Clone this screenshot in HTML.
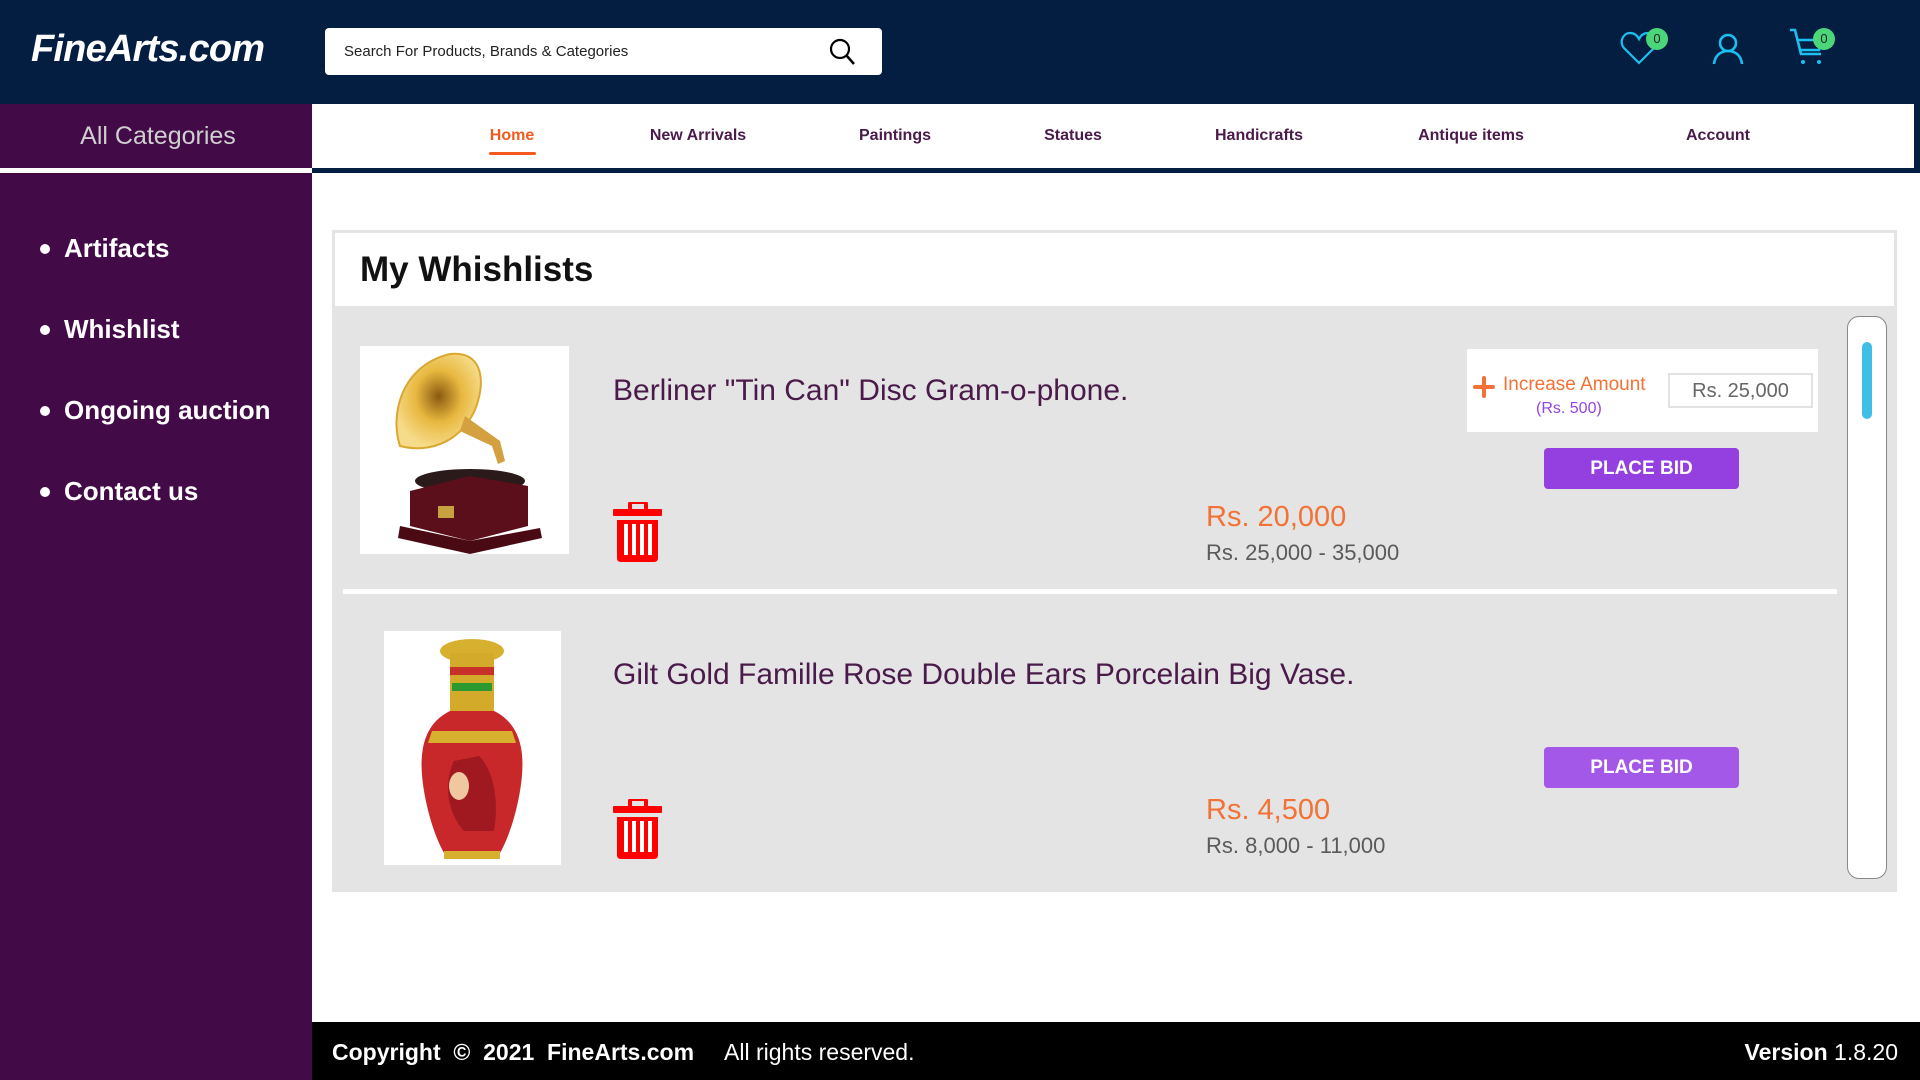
<!DOCTYPE html>
<html><head><meta charset="utf-8"><style>
*{margin:0;padding:0;box-sizing:border-box}
body{width:1920px;height:1080px;position:relative;overflow:hidden;font-family:"Liberation Sans",sans-serif;background:#fff}
.a{position:absolute}
.nav{font-size:16px;font-weight:bold;color:#4a1a4a;top:127px;transform:translateX(-50%);white-space:nowrap}
.side{left:64px;color:#fff;font-size:26px;font-weight:bold}
.dot{left:40px;width:10px;height:10px;border-radius:50%;background:#fff}
.title{left:613px;font-size:30px;color:#4a1a4a}
.price{left:1206px;font-size:29px;color:#f27235}
.range{left:1206px;font-size:22px;color:#5a5a5a}
.bid{left:1544px;width:195px;height:41px;border-radius:4px;color:#fff;font-weight:bold;font-size:19px;text-align:center;line-height:41px}
</style></head><body>
<div class="a" style="left:0;top:0;width:1920px;height:104px;background:#041e42"></div>
<div class="a" style="left:31px;top:28px;font-size:38px;font-style:italic;font-weight:bold;color:#fff;letter-spacing:-0.8px">FineArts.com</div>
<div class="a" style="left:325px;top:28px;width:557px;height:47px;background:#fff;border-radius:4px"></div>
<div class="a" style="left:344px;top:43px;font-size:15px;color:#222">Search For Products, Brands &amp; Categories</div>
<svg class="a" style="left:828px;top:37px" width="30" height="30" viewBox="0 0 30 30"><circle cx="12" cy="12" r="9" fill="none" stroke="#000" stroke-width="2.2"/><line x1="18.5" y1="18.5" x2="26" y2="27" stroke="#000" stroke-width="2.5"/></svg>
<svg class="a" style="left:1620px;top:30px" width="40" height="36" viewBox="0 0 40 36"><path d="M19 33 L4 18 C-1 12 3 3 10 3 C14 3 17 5 19 9 C21 5 24 3 28 3 C35 3 39 12 34 18 Z" fill="none" stroke="#1cc0f0" stroke-width="2.2"/></svg>
<div class="a" style="left:1646px;top:28px;width:22px;height:22px;border-radius:50%;background:#4cd67a;font-size:13px;text-align:center;line-height:22px;color:#222">0</div>
<svg class="a" style="left:1710px;top:30px" width="36" height="36" viewBox="0 0 36 36"><circle cx="18" cy="13" r="8" fill="none" stroke="#1cc0f0" stroke-width="2.6"/><path d="M4 34 C5 25 11 21 18 21 C25 21 31 25 32 34" fill="none" stroke="#1cc0f0" stroke-width="2.6"/></svg>
<svg class="a" style="left:1788px;top:28px" width="40" height="38" viewBox="0 0 40 38"><path d="M2 2 H7 L13 26 H33 M10 12 H34 L31 22 H13" fill="none" stroke="#1cc0f0" stroke-width="2.6"/><circle cx="15" cy="34" r="2" fill="#1cc0f0"/><circle cx="31" cy="34" r="2" fill="#1cc0f0"/></svg>
<div class="a" style="left:1813px;top:28px;width:22px;height:22px;border-radius:50%;background:#4cd67a;font-size:13px;text-align:center;line-height:22px;color:#222">0</div>

<div class="a" style="left:312px;top:104px;width:1602px;height:64px;background:#fff"></div>
<div class="a" style="left:312px;top:168px;width:1608px;height:5px;background:#041e42"></div>
<div class="a" style="left:1914px;top:104px;width:6px;height:69px;background:#041e42"></div>
<div class="a nav" style="left:512px;color:#f25a1e">Home</div>
<div class="a" style="left:489px;top:152px;width:47px;height:3px;background:#f25a1e;border-radius:2px"></div>
<div class="a nav" style="left:698px">New Arrivals</div>
<div class="a nav" style="left:895px">Paintings</div>
<div class="a nav" style="left:1073px">Statues</div>
<div class="a nav" style="left:1259px">Handicrafts</div>
<div class="a nav" style="left:1471px">Antique items</div>
<div class="a nav" style="left:1718px">Account</div>

<div class="a" style="left:0;top:104px;width:312px;height:976px;background:#420b48"></div>
<div class="a" style="left:0;top:168px;width:312px;height:5px;background:#fff"></div>
<div class="a" style="left:0;top:122px;width:316px;text-align:center;font-size:25px;color:#cfcfcf">All Categories</div>
<div class="a dot" style="top:244px"></div><div class="a side" style="top:233px">Artifacts</div>
<div class="a dot" style="top:325px"></div><div class="a side" style="top:314px">Whishlist</div>
<div class="a dot" style="top:406px"></div><div class="a side" style="top:395px">Ongoing auction</div>
<div class="a dot" style="top:487px"></div><div class="a side" style="top:476px">Contact us</div>

<div class="a" style="left:332px;top:230px;width:1565px;height:77px;background:#fff;border:3px solid #e4e4e4;border-bottom:none"></div>
<div class="a" style="left:360px;top:250px;font-size:35px;font-weight:bold;color:#111">My Whishlists</div>
<div class="a" style="left:332px;top:306px;width:1565px;height:586px;background:#e4e4e4"></div>
<div class="a" style="left:343px;top:589px;width:1494px;height:5px;background:#fff"></div>

<div class="a" style="left:360px;top:346px;width:209px;height:208px;background:#fff"></div>
<svg class="a" style="left:360px;top:346px" width="209" height="208" viewBox="0 0 209 208">
<defs><radialGradient id="g" cx="50%" cy="45%" r="55%"><stop offset="0" stop-color="#8a5a10"/><stop offset=".5" stop-color="#e8b840"/><stop offset="1" stop-color="#f6dc8a"/></radialGradient></defs>
<path d="M40 100 C30 70 40 20 90 8 C120 5 125 30 118 55 C110 85 80 110 40 100 Z" fill="url(#g)" stroke="#d8a830" stroke-width="2"/>
<path d="M105 70 L140 95 L145 115 L138 118 L132 100 L100 85 Z" fill="#d4a040"/>
<ellipse cx="110" cy="135" rx="55" ry="12" fill="#2a1a1a"/>
<path d="M50 145 L110 130 L168 140 L168 180 L110 195 L50 180 Z" fill="#5a0f1a"/>
<path d="M40 180 L110 195 L180 182 L182 192 L110 208 L38 192 Z" fill="#4a0a14"/>
<rect x="78" y="160" width="16" height="12" fill="#c8a040"/>
</svg>
<div class="a" style="left:384px;top:631px;width:177px;height:234px;background:#fff"></div>
<svg class="a" style="left:384px;top:631px" width="177" height="234" viewBox="0 0 177 234">
<ellipse cx="88" cy="20" rx="32" ry="12" fill="#d8b030"/>
<rect x="66" y="22" width="44" height="60" fill="#d4aa2a"/>
<rect x="66" y="36" width="44" height="8" fill="#c8302a"/><rect x="68" y="52" width="40" height="8" fill="#2a9a30"/>
<path d="M66 80 C35 95 35 130 40 160 C45 190 55 215 62 225 L114 225 C121 215 131 190 136 160 C141 130 141 95 110 80 Z" fill="#c8282a"/>
<path d="M48 100 L128 100 L132 112 L44 112 Z" fill="#d8b030"/>
<path d="M70 130 C60 150 62 180 80 200 L110 200 C115 170 110 140 95 125 Z" fill="#a01820"/>
<ellipse cx="75" cy="155" rx="10" ry="14" fill="#f0c8a0"/>
<rect x="60" y="220" width="56" height="8" fill="#d8b030"/>
</svg>

<div class="a title" style="top:374px">Berliner "Tin Can" Disc Gram-o-phone.</div>
<div class="a title" style="top:658px">Gilt Gold Famille Rose Double Ears Porcelain Big Vase.</div>

<svg class="a" style="left:613px;top:502px" width="50" height="60" viewBox="0 0 50 60"><rect x="17" y="0" width="16" height="9" rx="2" fill="none" stroke="#f00" stroke-width="4"/><rect x="0" y="7" width="49" height="7" rx="1" fill="#f00"/><path d="M4 18 H45 V56 Q45 60 41 60 H8 Q4 60 4 56 Z" fill="#f00"/><g fill="#fff"><rect x="11" y="22" width="4" height="31"/><rect x="19" y="22" width="4" height="31"/><rect x="27" y="22" width="4" height="31"/><rect x="35" y="22" width="4" height="31"/></g></svg>
<svg class="a" style="left:613px;top:799px" width="50" height="60" viewBox="0 0 50 60"><rect x="17" y="0" width="16" height="9" rx="2" fill="none" stroke="#f00" stroke-width="4"/><rect x="0" y="7" width="49" height="7" rx="1" fill="#f00"/><path d="M4 18 H45 V56 Q45 60 41 60 H8 Q4 60 4 56 Z" fill="#f00"/><g fill="#fff"><rect x="11" y="22" width="4" height="31"/><rect x="19" y="22" width="4" height="31"/><rect x="27" y="22" width="4" height="31"/><rect x="35" y="22" width="4" height="31"/></g></svg>

<div class="a price" style="top:501px">Rs. 20,000</div>
<div class="a range" style="top:540px">Rs. 25,000 - 35,000</div>
<div class="a price" style="top:794px">Rs. 4,500</div>
<div class="a range" style="top:833px">Rs. 8,000 - 11,000</div>

<div class="a" style="left:1467px;top:349px;width:351px;height:83px;background:#fff"></div>
<svg class="a" style="left:1473px;top:376px" width="22" height="22" viewBox="0 0 22 22"><path d="M11 2 V20 M2 11 H20" stroke="#f27235" stroke-width="4" stroke-linecap="round"/></svg>
<div class="a" style="left:1503px;top:374px;font-size:19px;color:#f27235">Increase Amount</div>
<div class="a" style="left:1536px;top:400px;font-size:16px;color:#9444e0">(Rs. 500)</div>
<div class="a" style="left:1668px;top:373px;width:145px;height:35px;border:2px solid #e2e2e2;font-size:20px;color:#666;text-align:center;line-height:33px">Rs. 25,000</div>

<div class="a bid" style="top:448px;background:#9440e0">PLACE BID</div>
<div class="a bid" style="top:747px;background:#a458e8">PLACE BID</div>

<div class="a" style="left:1847px;top:316px;width:40px;height:563px;background:#fff;border:1px solid #888;border-radius:12px"></div>
<div class="a" style="left:1862px;top:342px;width:10px;height:77px;background:#40bfe6;border-radius:5px"></div>

<div class="a" style="left:312px;top:1022px;width:1608px;height:58px;background:#000"></div>
<div class="a" style="left:332px;top:1039px;font-size:23px;color:#fff;white-space:nowrap"><b>Copyright &nbsp;© &nbsp;2021 &nbsp;FineArts.com</b><span style="margin-left:30px">All rights reserved.</span></div>
<div class="a" style="right:22px;top:1039px;font-size:23px;color:#fff"><b>Version</b> 1.8.20</div>
</body></html>
